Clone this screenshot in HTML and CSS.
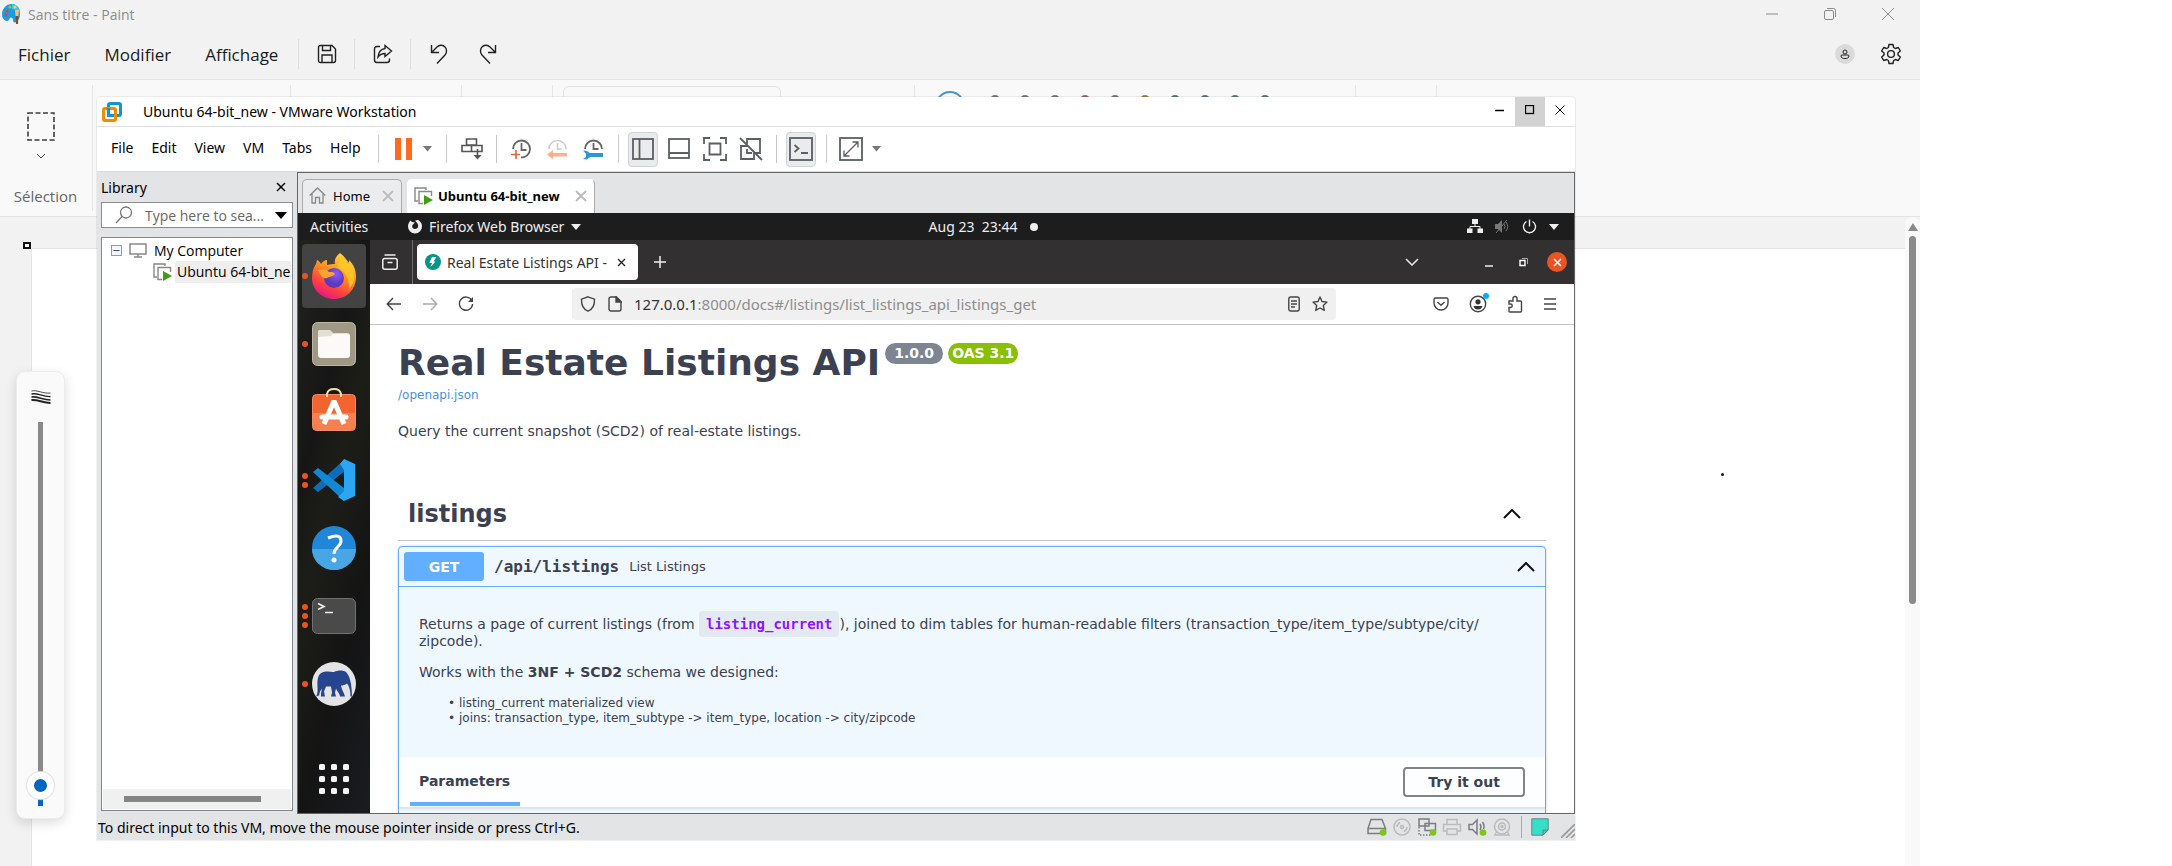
FILE: index.html
```html
<!DOCTYPE html>
<html lang="fr">
<head>
<meta charset="utf-8">
<title>Sans titre - Paint</title>
<link rel="stylesheet" href="styles.css">
</head>
<body>
<div class="paint">
  <header class="paint-title">
    <svg class="paint-logo" width="20" height="22" viewBox="0 0 20 22"><path d="M10 1C4 1 0 6 0 11c0 4 2 7 5 7 2 0 2-2 3-3s3 0 3 2 1 3 3 2c4-2 5-8 3-13-1-3-4-5-7-5z" fill="#1b9de2"/><path d="M10 1c4 0 7 3 8 7l-8-2z" fill="#45c3f5"/><circle cx="5" cy="8" r="1.6" fill="#e8442e"/><circle cx="8" cy="4" r="1.6" fill="#7bd04b"/><circle cx="4" cy="12" r="1.5" fill="#d4472b"/><circle cx="13" cy="4" r="1.5" fill="#ffd23a"/><path d="M13 7h4l-.6 6h-2.8z" fill="#f0c27a"/><path d="M13.6 13h2.8l-.4 8h-2z" fill="#8f4a1c"/></svg>
    <span class="paint-name">Sans titre - Paint</span>
    <div class="paint-controls">
      <button aria-label="Réduire"><svg width="14" height="14" viewBox="0 0 14 14"><path d="M1 7h12"/></svg></button>
      <button aria-label="Restaurer"><svg width="14" height="14" viewBox="0 0 14 14"><rect x="1.500" y="3.500" width="9" height="9" rx="1.500"/><path d="M4 1.500h6.500a2 2 0 0 1 2 2V10"/></svg></button>
      <button aria-label="Fermer"><svg width="14" height="14" viewBox="0 0 14 14"><path d="M1 1l12 12M13 1L1 13"/></svg></button>
    </div>
  </header>
  <nav class="paint-menu">
    <div class="paint-menus"><button>Fichier</button><button>Modifier</button><button>Affichage</button></div>
    <div class="quick first"><button aria-label="Enregistrer"><svg width="20" height="20" viewBox="0 0 20 20"><path d="M3 1.500h12L18.500 5v11.500a2 2 0 0 1-2 2h-13a2 2 0 0 1-2-2v-13a2 2 0 0 1 2-2z"/><path d="M5.500 1.500v5h8v-5M5 18.500v-7.500h10v7.500"/></svg></button></div>
    <div class="quick"><button aria-label="Partager"><svg width="20" height="20" viewBox="0 0 20 20"><path d="M7 2.500H4a2.500 2.500 0 0 0-2.500 2.500v11A2.500 2.500 0 0 0 4 18.500h10a2.500 2.500 0 0 0 2.500-2.500v-1.500"/><path d="M12 1.500l6.500 5.500L12 12.500V9.500c-3 0-5 1-7 3.500.5-4.500 3-8 7-8.500z"/></svg></button></div>
    <div class="quick undo"><button aria-label="Annuler"><svg width="20" height="20" viewBox="0 0 20 20"><path d="M2.500 1v7.500H10M3 8l5-5c3-3 6.500-1.500 8 0s2.500 5 0 8l-8 8.500"/></svg></button><button aria-label="Rétablir"><svg width="20" height="20" viewBox="0 0 20 20"><path d="M17.500 1v7.500H10M17 8l-5-5C9 0 5.500 1.500 4 3s-2.500 5 0 8l8 8.500"/></svg></button></div>
    <div class="paint-account">
      <button class="avatar" aria-label="Compte"><svg width="10" height="10" viewBox="0 0 10 10"><circle cx="5" cy="3" r="2"/><path d="M2 6h6a1 1 0 0 1 1 1c0 2-2 2.500-4 2.500S1 9 1 7a1 1 0 0 1 1-1z"/></svg></button>
      <button aria-label="Paramètres"><svg width="22" height="22" viewBox="0 0 22 22"><path d="M9 1.500h4l.6 3 1.700 1 3-1 2 3.400-2.300 2.100v2l2.300 2.100-2 3.400-3-1-1.700 1-.6 3H9l-.6-3-1.700-1-3 1-2-3.400L4 12V10L1.700 7.900l2-3.400 3 1 1.700-1z" stroke-linejoin="round"/><circle cx="11" cy="11" r="3.400"/></svg></button>
    </div>
  </nav>
  <section class="ribbon">
    <div class="group tool">
      <button class="select-tool"><svg width="28" height="29" viewBox="0 0 28 29"><rect x="1" y="1" width="26" height="27" fill="none" stroke="#3c3c3c" stroke-width="1.600" stroke-dasharray="5 2.500"/></svg><svg width="10" height="6" viewBox="0 0 10 6"><path d="M1 1l4 4 4-4"/></svg><span>Sélection</span></button>
    </div>
    <div class="group g2"></div><div class="group g3"></div><div class="group g4"></div>
    <div class="group g5"><div class="shapes"></div></div>
    <div class="group g6"><i class="ring"></i><div class="swatches"><i></i><i></i><i></i><i></i><i></i><i></i><i></i><i></i><i></i><i></i></div></div>
    <div class="group g7"></div>
  </section>
  <main class="workspace">
    <div class="ruler"><i class="handle"></i></div>
    <div class="sheet"><i class="ink"></i></div>
    <div class="paint-scroll"><svg width="10" height="8" viewBox="0 0 10 8"><path d="M5 0l5 8H0z" fill="#8a8a8a"/></svg><i></i></div>
  </main>
  <aside class="size-card">
    <svg width="20" height="14" viewBox="0 0 20 14" fill="none" stroke="#222"><path d="M.5 1C6-.5 12 4 19.500 3" stroke-width=".8"/><path d="M.5 4c6-1.500 11 3 19 2.500" stroke-width="1.300"/><path d="M.5 7c6-1 11 3 19 3" stroke-width="1.600"/><path d="M.5 10c6-1 11 3 19 3" stroke-width="2"/></svg>
    <input type="range" min="0" max="100" value="2" aria-label="Taille">
  </aside>

  <div class="vm">
    <header class="vm-title">
      <svg width="20" height="20" viewBox="0 0 20 20" fill="none" stroke-width="3"><rect x="6.500" y="1.500" width="12" height="12" rx="1.500" stroke="#0f96d4"/><rect x="1.500" y="6.500" width="12" height="12" rx="1.500" stroke="#f38b00"/><path d="M6.500 6v7.500H12" stroke="#0f96d4"/></svg>
      <span>Ubuntu 64-bit_new - VMware Workstation</span>
      <div class="vm-controls">
        <button aria-label="Minimize"><svg width="11" height="11"><path d="M0 5.500h9"/></svg></button>
        <button class="max" aria-label="Maximize"><svg width="11" height="11"><rect x=".5" y=".5" width="8" height="8"/></svg></button>
        <button aria-label="Close"><svg width="11" height="11"><path d="M.5.5l9 9M9.500.5l-9 9" stroke-width="1"/></svg></button>
      </div>
    </header>
    <nav class="vm-bar">
      <div class="vm-menus"><button>File</button><button>Edit</button><button>View</button><button>VM</button><button>Tabs</button><button>Help</button></div>
      <div class="tools t1"><button aria-label="Pause"><svg width="18" height="22" viewBox="0 0 18 22"><path d="M0 0h6v22H0zM11 0h6v22h-6z" fill="#ff6a1f"/></svg></button><button aria-label="Power menu"><svg width="9" height="6"><path d="M0 0h9L4.500 5.500z" fill="#777"/></svg></button></div>
      <div class="tools t2"><button aria-label="Send Ctrl+Alt+Del"><svg width="22" height="22" viewBox="0 0 22 22" fill="none" stroke="#555" stroke-width="1.600"><path d="M5.500 1h10v6h-10zM1 7.500h9.500v6H1zM10.500 7.500H21v6H10.500zM16.500 11v9"/><path d="M12.500 17h8l-4 4.500z" fill="#555" stroke="none"/></svg></button></div>
      <div class="tools t3">
        <button aria-label="Snapshot"><svg width="22" height="22" viewBox="0 0 22 22" fill="none"><path d="M3 11a8.500 8.500 0 1 1 8 8.500M11.500 5v7h5" stroke="#666" stroke-width="1.800"/><path d="M6 12v9M1 16.500h9" stroke="#e9643a" stroke-width="1.600"/></svg></button>
        <button aria-label="Revert"><svg width="22" height="22" viewBox="0 0 22 22" fill="none"><path d="M3 11a8.500 8.500 0 0 1 17 0M11.500 5v6h4" stroke="#ccc" stroke-width="1.600"/><path d="M1 16.500l6-4.500v3h14v3.500H7v2.500z" fill="#ffb08a"/></svg></button>
        <button aria-label="Manage snapshots"><svg width="22" height="22" viewBox="0 0 22 22" fill="none"><path d="M3 11a8.500 8.500 0 0 1 17 0M11.500 5v6h5" stroke="#666" stroke-width="1.800"/><path d="M1 12.500l4 .5 3 2h13v4H8l-3 2.500-4-.5 3-2v-3z" fill="#2d97d6"/></svg></button>
      </div>
      <div class="tools t4">
        <button class="on" aria-label="Library view"><svg width="22" height="22" viewBox="0 0 22 22"><rect x="1" y="1" width="20" height="20"/><path d="M7.500 1v20"/></svg></button>
        <button aria-label="Thumbnails"><svg width="22" height="22" viewBox="0 0 22 22"><rect x="1" y="1" width="20" height="19"/><path d="M1 15h20"/></svg></button>
        <button aria-label="Full screen"><svg width="24" height="24" viewBox="0 0 24 24"><path d="M1 7V1h6M17 1h6v6M23 17v6h-6M7 23H1v-6M6.500 6.500h11v11h-11z"/></svg></button>
        <button aria-label="Unity"><svg width="24" height="24" viewBox="0 0 24 24"><path d="M8 7V2h13v14h-5M8 12v4h5M9 9H2v13h13v-7"/><path d="M1 1l22 22"/></svg></button>
      </div>
      <div class="tools t5"><button class="on" aria-label="Console"><svg width="24" height="24" viewBox="0 0 24 24"><rect x="1" y="1" width="22" height="22"/><path d="M5.500 8l4 3.500-4 3.500M12 16h7"/></svg></button></div>
      <div class="tools t6"><button aria-label="Stretch"><svg width="24" height="24" viewBox="0 0 24 24"><rect x="1" y="1" width="22" height="22"/><path d="M5 13.500V19h5.500M13.500 5H19v5.500M5.500 18.500l13-13" stroke-width="1.300"/></svg></button><button aria-label="Stretch menu"><svg width="9" height="6"><path d="M0 0h9L4.500 5.500z" fill="#777" stroke="none"/></svg></button></div>
    </nav>
    <div class="vm-body">
      <aside class="library">
        <div class="lib-head"><span>Library</span><button aria-label="Close library"><svg width="10" height="10"><path d="M1 1l8 8M9 1L1 9" stroke="#000" stroke-width="1.500"/></svg></button></div>
        <label class="search"><svg width="18" height="18" viewBox="0 0 18 18" fill="none" stroke="#777" stroke-width="1.300"><circle cx="11" cy="6.500" r="5.500"/><path d="M7 10.500L1 17"/></svg><input type="text" placeholder="Type here to sea..." aria-label="Search library"><svg width="12" height="7"><path d="M0 0h12L6 7z" fill="#000"/></svg></label>
        <div class="tree">
          <div class="node root"><svg width="11" height="11" viewBox="0 0 11 11"><rect x=".5" y=".5" width="10" height="10" fill="#f6f6f6" stroke="#999"/><path d="M2.500 5.500h6" stroke="#2f4f9c"/></svg><svg width="18" height="15" viewBox="0 0 18 15" fill="none" stroke="#888" stroke-width="1.500"><path d="M1 1h16v10H1zM9 11v3M5 14h8"/></svg><span>My Computer</span></div>
          <div class="node leaf"><svg width="19" height="18" viewBox="0 0 19 18" fill="none"><path d="M4 14H1V1h11v2M9 16.500H5V4.500h12.500V9" stroke="#888" stroke-width="1.400"/><path d="M10 8l9 5-9 5z" fill="#3f9c14"/></svg><span>Ubuntu 64-bit_ne</span></div>
          <div class="tree-scroll"><i></i></div>
        </div>
      </aside>
      <section class="console">
        <div class="vm-tabs">
          <div class="vm-tab"><svg width="17" height="17" viewBox="0 0 17 17" fill="none" stroke="#888" stroke-width="1.300"><path d="M.7 8.500L8.500 1l7.800 7.500M3 7v9h3.500v-5.500h4V16H14V7"/></svg><span>Home</span><button aria-label="Close Home"><svg width="12" height="12"><path d="M1 1l10 10M11 1L1 11"/></svg></button></div>
          <div class="vm-tab active"><svg width="19" height="18" viewBox="0 0 19 18" fill="none"><path d="M4 14H1V1h11v2M9 16.500H5V4.500h12.500V9" stroke="#888" stroke-width="1.400"/><path d="M10 8l9 5-9 5z" fill="#3f9c14"/></svg><span>Ubuntu 64-bit_new</span><button aria-label="Close Ubuntu"><svg width="12" height="12"><path d="M1 1l10 10M11 1L1 11"/></svg></button></div>
        </div>
        <div class="gnome">
          <span class="activities">Activities</span>
          <span class="appmenu"><svg width="14" height="15" viewBox="0 0 14 15"><path d="M7 1.500C10 1 9.500 0 12 2.500c1.500 1.500 2 3 2 5A7 7 0 0 1 0 7.500C0 5 1 3 2.500 1.500L4 3l3 .500-2 2c-1.500 1-1 4.500 2 4.500s4-3 2.500-5.500C9 3.500 8 3 7 1.500z" fill="#eee"/></svg>Firefox Web Browser<svg width="10" height="6"><path d="M0 0h10L5 6z" fill="#eee"/></svg></span>
          <span class="clock">Aug 23&nbsp; 23:44<i></i></span>
          <span class="sys">
            <svg width="16" height="15" viewBox="0 0 16 15"><path d="M5 0h6v5H5zM0 9.500h5.500V14H0zM10.500 9.500H16V14h-5.500z" fill="#eee"/><path d="M8 5v3M3 10V7.500h10V10" fill="none" stroke="#eee"/></svg>
            <svg width="15" height="15" viewBox="0 0 15 15"><path d="M0 5h3l4-4v13l-4-4H0z" fill="#777"/><path d="M9 5q2 2.500 0 5M11 3q3.500 4.500 0 9M1 14L12 1" fill="none" stroke="#777"/></svg>
            <svg width="15" height="15" viewBox="0 0 15 15" fill="none" stroke="#eee" stroke-width="1.400"><path d="M4.500 2.500a6 6 0 1 0 6 0M7.500.5v7"/></svg>
            <svg width="10" height="6"><path d="M0 0h10L5 6z" fill="#eee"/></svg>
          </span>
        </div>
        <div class="session">
          <aside class="dock">
            <div class="app current"><span class="pips"><i></i></span><svg width="46" height="46" viewBox="0 0 46 46"><defs><linearGradient id="fx" x1=".8" y1="0" x2=".3" y2="1"><stop offset="0" stop-color="#ffe23a"/><stop offset=".45" stop-color="#ff9020"/><stop offset=".75" stop-color="#ff4040"/><stop offset="1" stop-color="#e31587"/></linearGradient><radialGradient id="fp" cx=".6" cy=".3"><stop offset="0" stop-color="#9059ff"/><stop offset="1" stop-color="#5b3ac0"/></radialGradient></defs><path d="M29 0c4 3 7 7 7 11 3-1 2-3 2-4 5 5 7 10 7 17C45 37 35 46 23 46S1 37 1 25C1 20 2 15 5 11l1-4c2 1 3 2 4 4 1-2 4-4 6-4v5c3-1 6-1 8-1-1-4 1-8 5-11z" fill="url(#fx)"/><path d="M31 2c7 7 12 12 12 22 0 5-2 9-5 12 1-8-2-17-12-22z" fill="#ffc928" opacity=".8"/><circle cx="23" cy="25" r="10" fill="url(#fp)"/><path d="M7 17c5-1 9-1 11 2 3 0 5 0 6 2-2 3-5 2-8 4-3 1-6-1-9-8z" fill="#ffa52c"/></svg></div>
            <div class="app"><span class="pips"><i></i></span><svg width="44" height="44" viewBox="0 0 44 44"><rect x=".5" y=".5" width="43" height="43" rx="5" fill="#9f9884" stroke="#bcb6a6"/><path d="M6 12V10q0-2 2-2h10l3 3h14q3 0 3 3H6z" fill="#e3dfd4"/><rect x="6" y="12" width="32" height="24" rx="3" fill="#fbfaf8"/><path d="M6 15V10q0-2 2-2h9l4 3-2 3z" fill="#e3dfd4"/></svg></div>
            <div class="app store"><span class="pips"></span><svg width="44" height="37" viewBox="0 7 44 37"><rect x=".5" y="7.500" width="43" height="36" rx="4" fill="#f26430" stroke="#f58a62"/><path d="M1 26h42v13q0 4-4 4H5q-4 0-4-4z" fill="#f58050"/><path d="M15 10V7q1-5 7-5t7 5v3" fill="none" stroke="#f5ddaa" stroke-width="2"/><path d="M12 37L22 14l10 23" fill="none" stroke="#fff" stroke-width="5" stroke-linejoin="bevel"/><path d="M10 30h24" stroke="#fff" stroke-width="5" stroke-linecap="round"/></svg></div>
            <div class="app"><span class="pips"><i></i><i></i></span><svg width="44" height="44" viewBox="0 0 44 44"><path d="M1 30l5 4 27-21V1z" fill="#0a6fb8"/><path d="M1 14l5-4 26 20v13z" fill="#1287d4"/><path d="M32 1l11 5v32l-11 5-6-4 6-6V12l-4-6z" fill="#2aa6f2"/></svg></div>
            <div class="app"><span class="pips"></span><svg width="44" height="44" viewBox="0 0 44 44"><circle cx="22" cy="22" r="22" fill="#1f86d8"/><path d="M0 23h44a22 21 0 0 1-44 0z" fill="#48a6e4"/><path d="M16 12q13-5 13 3c0 6-7 6-7 13" fill="none" stroke="#fff" stroke-width="3"/><circle cx="22" cy="34" r="2.500" fill="#fff"/></svg></div>
            <div class="app"><span class="pips"><i></i><i></i><i></i></span><svg width="44" height="36" viewBox="0 0 44 36"><rect x=".5" y=".5" width="43" height="35" rx="5" fill="#4a4a4a" stroke="#727272"/><path d="M6 5.500l6 3-6 3M13 14.500h8" fill="none" stroke="#eee" stroke-width="1.700"/></svg></div>
            <div class="app"><span class="pips"><i></i></span><svg width="44" height="44" viewBox="0 0 44 44"><circle cx="22" cy="22" r="22" fill="#e4e4e4"/><path d="M4 34.500c2-3 1.500-6 1.500-9C5 16 6 10 14 9.500c3 0 6 .5 8 .5 4-2 9-2 12 0 3 3 4 7 5 12 .5 4 1 8 1 12.500h-1.500c0-5-1-10-3.500-13-2 1.500-4 2-6 2 .5 3 2 6 3 8l1 3h-5c0-3-3-5-4-8l-1 4 1 4h-5l1-4-1-6h-5l-2 5 1 5H9v-3l1-5-2 3-1 4z" fill="#27448f"/></svg></div>
            <div class="app grid"><span class="pips"></span><svg width="30" height="30" viewBox="0 0 30 30" fill="#f4f4f4"><rect width="6" height="6" rx="1.500"/><rect x="12" width="6" height="6" rx="1.500"/><rect x="24" width="6" height="6" rx="1.500"/><rect y="12" width="6" height="6" rx="1.500"/><rect x="12" y="12" width="6" height="6" rx="1.500"/><rect x="24" y="12" width="6" height="6" rx="1.500"/><rect y="24" width="6" height="6" rx="1.500"/><rect x="12" y="24" width="6" height="6" rx="1.500"/><rect x="24" y="24" width="6" height="6" rx="1.500"/></svg></div>
          </aside>
          <div class="firefox">
            <div class="ff-tabs">
              <button class="archive" aria-label="Recent"><svg width="16" height="16" viewBox="0 0 16 16" fill="none" stroke="#eee" stroke-width="1.500"><rect x=".8" y="4.500" width="14.400" height="10.700" rx="2"/><path d="M2.500 1h11M5.500 8.500h5"/></svg></button>
              <div class="ff-tab"><svg width="16" height="16" viewBox="0 0 16 16"><circle cx="8" cy="8" r="8" fill="#059487"/><path d="M11.500 3H7l-2.700 6H7l-1.500 4 5-5.500H8.500z" fill="#fff"/></svg><span>Real Estate Listings API - </span><button aria-label="Close tab"><svg width="9" height="9"><path d="M1 1l7 7M8 1L1 8" stroke="#222" stroke-width="1.300"/></svg></button></div>
              <button class="plus" aria-label="New tab"><svg width="12" height="12"><path d="M6 0v12M0 6h12" stroke="#eee" stroke-width="1.500"/></svg></button>
              <div class="ff-controls">
                <button aria-label="List tabs"><svg width="14" height="8" fill="none" stroke="#eee" stroke-width="1.500"><path d="M1 1l6 6 6-6"/></svg></button>
                <button aria-label="Minimize"><svg width="8" height="9"><path d="M0 8h8" stroke="#eee" stroke-width="1.500"/></svg></button>
                <button aria-label="Restore"><svg width="9" height="9" fill="none"><path d="M1 2.500h5v5H1z" stroke="#fff" stroke-width="1.400"/><path d="M3 .5h5.500V6" stroke="#aaa"/></svg></button>
                <button class="ff-close" aria-label="Close"><svg width="9" height="9"><path d="M1 1l7 7M8 1L1 8" stroke="#fff" stroke-width="1.500"/></svg></button>
              </div>
            </div>
            <div class="ff-nav">
              <div class="nav-buttons">
                <button aria-label="Back"><svg width="16" height="16" viewBox="0 0 16 16"><path d="M15 8H1.500M7 2L1.200 8 7 14"/></svg></button>
                <button class="off" aria-label="Forward"><svg width="16" height="16" viewBox="0 0 16 16"><path d="M1 8h13.500M9 2l5.800 6L9 14"/></svg></button>
                <button aria-label="Reload"><svg width="16" height="16" viewBox="0 0 16 16"><path d="M13.800 4.500A6.600 6.600 0 1 0 14.600 8"/><path d="M15 1v5h-5z" fill="#444" stroke="none"/></svg></button>
              </div>
              <div class="url">
                <svg width="16" height="16" viewBox="0 0 16 16"><path d="M8 .8l6.500 2.400c.3 6-2 10-6.500 12C3.500 13.200 1.200 9.200 1.500 3.200z"/></svg>
                <svg width="14" height="16" viewBox="0 0 14 16"><path d="M3 1h5.500L13 5.500V13a2 2 0 0 1-2 2H3a2 2 0 0 1-2-2V3a2 2 0 0 1 2-2z"/><path d="M8 1v5h5z" fill="#444"/></svg>
                <span class="address"><b>127.0.0.1</b>:8000/docs#/listings/list_listings_api_listings_get</span>
                <svg width="12" height="16" viewBox="0 0 12 16"><rect x=".8" y="1" width="10.400" height="14" rx="2"/><path d="M3 5h6M3 8h6M3 11h4"/></svg>
                <svg width="16" height="16" viewBox="0 0 16 16"><path d="M8 1l2 4.500 5 .6-3.700 3.300 1 5L8 12l-4.300 2.400 1-5L1 6.100l5-.6z" stroke-linejoin="round"/></svg>
              </div>
              <div class="nav-right">
                <button aria-label="Pocket"><svg width="16" height="16" viewBox="0 0 16 16"><path d="M2.500 2h11a1.500 1.500 0 0 1 1.500 1.500V7A7 7 0 0 1 1 7V3.500A1.500 1.500 0 0 1 2.500 2z"/><path d="M4.500 6L8 9.300 11.500 6"/></svg></button>
                <button class="account" aria-label="Account"><svg width="18" height="18" viewBox="0 0 18 18"><circle cx="9" cy="9" r="7.700"/><circle cx="9" cy="6.800" r="2.600" fill="#333" stroke="none"/><path d="M4.500 11h9q-1 3.500-4.500 3.500T4.500 11z" fill="#333" stroke="none"/></svg><i></i></button>
                <button aria-label="Extensions"><svg width="16" height="18" viewBox="0 0 16 18"><path d="M2 6h4V3.500a2 2 0 0 1 4 0V6h3.500q1 0 1 1v9q0 1-1 1H3q-1 0-1-1v-3.500h1.500a1.700 1.700 0 0 0 0-3.500H2z"/></svg></button>
                <button aria-label="Menu"><svg width="14" height="12" viewBox="0 0 14 12"><path d="M1 1h12M1 6h12M1 11h12"/></svg></button>
              </div>
            </div>
            <article class="page">
              <h1>Real Estate Listings API<span class="badges"><small>1.0.0</small><small class="oas">OAS 3.1</small></span></h1>
              <a class="spec" href="#">/openapi.json</a>
              <p class="intro">Query the current snapshot (SCD2) of real-estate listings.</p>
              <h2>listings<button aria-label="Collapse listings"><svg width="18" height="10"><path d="M1 9l8-8 8 8"/></svg></button></h2>
              <section class="op">
                <div class="op-head"><button class="get">GET</button><span class="path">/api/listings</span><span class="summary">List Listings</span><button class="fold" aria-label="Collapse operation"><svg width="18" height="10"><path d="M1 9l8-8 8 8"/></svg></button></div>
                <div class="desc">
                  <p>Returns a page of current listings (from <code>listing_current</code>), joined to dim tables for human-readable filters (transaction_type/item_type/subtype/city/<wbr>zipcode).</p>
                  <p>Works with the <strong>3NF + SCD2</strong> schema we designed:</p>
                  <ul><li>listing_current materialized view</li><li>joins: transaction_type, item_subtype -&gt; item_type, location -&gt; city/zipcode</li></ul>
                </div>
                <div class="params"><h4>Parameters</h4><button class="try">Try it out</button></div>
              </section>
            </article>
          </div>
        </div>
      </section>
    </div>
    <footer class="vm-status">
      <span>To direct input to this VM, move the mouse pointer inside or press Ctrl+G.</span>
      <div class="devices">
        <svg width="20" height="18" viewBox="0 0 20 18"><path d="M4 1.500h11l3.500 9v5H1v-5zM1 10.500h17"/><circle cx="16" cy="14.500" r="3.300" class="live"/></svg>
        <svg width="20" height="18" viewBox="0 0 20 18" class="dim"><circle cx="10" cy="9" r="8"/><circle cx="10" cy="9" r="1.500"/><path d="M5 9q0-3 3-4.500M15 9q0 3-3 4.500"/></svg>
        <svg width="20" height="18" viewBox="0 0 20 18"><path d="M2 1h10v7H2zM8 5.500h10.500v7H8z"/><path d="M2 9v8h12" stroke-dasharray="1.500 1.500"/><circle cx="16" cy="14.500" r="3.300" class="live"/></svg>
        <svg width="20" height="18" viewBox="0 0 20 18" class="dim"><path d="M5 6V1.500h10V6M5 13H1.500V6.500h17V13H15M5 11h10v5.500H5z"/></svg>
        <svg width="20" height="18" viewBox="0 0 20 18"><path d="M2 6.500h3.500L10 2v14l-4.500-4.500H2zM13 6q2 3 0 6M15.500 4q2.500 4 1 7"/><circle cx="16" cy="14.500" r="3.300" class="live"/></svg>
        <svg width="20" height="18" viewBox="0 0 20 18" class="dim"><circle cx="10" cy="8.500" r="7.500"/><circle cx="10" cy="8.500" r="3.500"/><circle cx="10" cy="8.500" r="1"/><path d="M4.500 14L3 17h14l-1.500-3"/></svg>
      </div>
      <div class="note"><svg width="18" height="18" viewBox="0 0 18 18"><path d="M.8.800h16.400V12L12 17.200H.8z" fill="#36e0c8" stroke="#5a8a88"/><path d="M17 12h-5v5z" fill="#5fb8ac" stroke="#5a8a88"/></svg><svg class="grip" width="14" height="14" viewBox="0 0 14 14"><path d="M0 14L14 0M5 14l9-9M10 14l4-4" stroke="#999" stroke-width="1.600"/></svg></div>
    </footer>
  </div>
</div>
</body>
</html>
```
FILE: styles.css
```css
* { box-sizing: border-box; }
body { margin: 0; background: #fff; font-family: "Open Sans", "Noto Sans", sans-serif; color: #1b1b1b; }
button { border: 0; padding: 0; margin: 0; background: none; color: inherit; font: inherit; display: flex; align-items: center; justify-content: center; }
svg { display: block; flex: none; }
i { display: block; }

/* Paint window */
.paint { position: relative; width: 88.4%; height: 100vh; min-height: 640px; display: flex; flex-direction: column; overflow: hidden; background: #f2f2f2; }
.paint-title { display: flex; align-items: center; height: 28px; padding: 0 25px 0 2px; color: #8c8c8c; font-size: 14px; }
.paint-name { margin-left: 6px; }
.paint-controls { margin-left: auto; display: flex; gap: 44px; }
.paint-controls svg { fill: none; stroke: #8a8a8a; }
.paint-menu { display: flex; align-items: center; height: 52px; border-bottom: 1px solid #e6e6e6; font-size: 17px; padding-right: 18px; }
.paint-menus { display: flex; gap: 34px; width: 298px; padding: 2px 0 0 18px; }
.quick { display: flex; align-items: center; justify-content: center; width: 56px; height: 30px; border-left: 1px solid #dcdcdc; }
.quick svg, .paint-account svg { fill: none; stroke: #222; stroke-width: 1.4; }
.quick.undo { width: auto; padding-left: 18px; gap: 29px; }
.paint-account { margin-left: auto; display: flex; align-items: center; gap: 25px; }
.paint-account .avatar { width: 20px; height: 20px; border-radius: 50%; background: #dadada; }
.avatar svg { stroke-width: 1; }
.ribbon { display: flex; height: 137px; padding: 5px 0; background: #f9f9f9; border-bottom: 1px solid #e4e4e4; }
.group { border-right: 1px solid #e6e6e6; overflow: hidden; }
.tool { width: 93px; }
.select-tool { flex-direction: column; width: 82px; padding-top: 27px; font-size: 15px; color: #666; }
.select-tool svg + svg { margin-top: 12px; fill: none; stroke: #444; }
.select-tool span { margin-top: 27px; padding-left: 9px; line-height: 20px; }
.g2 { width: 198px; }
.g3 { width: 171px; }
.g4 { width: 91px; }
.g5 { width: 362px; padding: 1px 10px; }
.shapes { width: 218px; height: 80px; border: 1px solid #e2e2e2; border-radius: 6px; }
.g6 { width: 441px; display: flex; padding: 6px 20px; }
.ring { width: 30px; height: 30px; border: 2px solid #4a95d6; border-radius: 50%; }
.swatches { display: flex; gap: 20px; padding: 4px 0 0 25px; }
.swatches i { width: 10px; height: 10px; border-radius: 50%; background: #777; }
.swatches i:nth-child(4) { background: #a0626a; }
.swatches i:nth-child(6) { background: #8b8b4a; }
.swatches i:nth-child(n+7) { background: #5f7480; }
.g7 { width: 81px; }
.workspace { flex: 1; display: grid; grid-template-columns: 31px 1fr 15px; }
.ruler { display: flex; justify-content: flex-end; padding-top: 25px; }
.handle { width: 8px; height: 7px; border: 2px solid #111; background: #fff; }
.sheet { margin-top: 31px; background: #fff; border: 1px solid #e4e4e4; border-width: 1px 0 0 1px; }
.ink { width: 3px; height: 3px; border-radius: 50%; background: #111; margin: 224px 0 0 90.2%; }
.paint-scroll { display: flex; flex-direction: column; align-items: center; gap: 5px; padding-top: 6px; background: #f9f9f9; border-radius: 8px 8px 0 0; }
.paint-scroll i { width: 7px; height: 368px; border-radius: 4px; background: #8a8a8a; }
.size-card { position: absolute; left: 16px; top: 371px; width: 49px; height: 448px; padding-top: 18px; display: flex; flex-direction: column; align-items: center; gap: 18px; background: #fafafa; border: 1px solid #ececec; border-radius: 9px; box-shadow: 0 4px 12px rgba(0,0,0,.14); }
.size-card input { appearance: none; writing-mode: vertical-lr; direction: rtl; width: 27px; height: 384px; margin: 0; background: linear-gradient(#8a8a8a, #8a8a8a) center / 5px 100% no-repeat; }
.size-card input::-webkit-slider-runnable-track { width: 27px; height: 100%; background: linear-gradient(#0067c0, #0067c0) center bottom / 5px 8px no-repeat; }
.size-card input::-webkit-slider-thumb { appearance: none; width: 27px; height: 27px; border: 7px solid #fff; border-radius: 50%; background: #0067c0; box-shadow: 0 0 1px 1px #e0e0e0; }

/* Virtual machine window */
.vm { position: absolute; left: 97px; top: 97px; right: 345px; bottom: 26px; display: flex; flex-direction: column; background: #e3e4e6; border-radius: 4px 4px 0 0; box-shadow: 0 0 0 1px rgba(0,0,0,.06); color: #000; font-family: "Noto Sans", sans-serif; font-size: 14px; overflow: hidden; }
.vm-title { display: flex; height: 30px; padding-left: 5px; align-items: center; background: #fff; border-bottom: 1px solid #dedede; }
.vm-title span { margin-left: 21px; }
.vm-controls { margin-left: auto; display: flex; height: 100%; }
.vm-controls button { width: 30px; height: 100%; padding-bottom: 2px; }
.vm-controls svg { fill: none; stroke: #000; stroke-width: 1.3; }
.vm-controls .max { background: #d2d2d2; }
.vm-bar { display: flex; align-items: center; height: 45px; background: #fff; border-bottom: 1px solid #ddd; }
.vm-menus { display: flex; width: 281px; padding: 0 0 3px 14px; gap: 18px; }
.tools { display: flex; align-items: center; height: 28px; border-left: 1px solid #c8c8c8; }
.t1 { width: 68px; padding-left: 16px; gap: 10px; }
.t2 { width: 50px; padding-left: 14px; }
.t3 { width: 122px; padding-left: 13px; gap: 14px; }
.t4 { width: 158px; padding-left: 9px; gap: 6px; }
.t5 { width: 50px; padding-left: 9px; }
.t6 { padding-left: 12px; gap: 9px; }
.t4 button, .t5 button { width: 30px; height: 35px; border-radius: 4px; }
.t4 svg, .t5 svg, .t6 svg { fill: none; stroke: #5a5f63; stroke-width: 1.8; }
.tools .on { background: #e9ebec; border: 1px solid #cfd3d4; }
.vm-body { flex: 1; min-height: 0; display: grid; grid-template-columns: 200px minmax(0, 1fr); }
.library { display: flex; flex-direction: column; min-height: 0; min-width: 0; padding: 2px 4px 3px; }
.lib-head { display: flex; align-items: center; justify-content: space-between; height: 26px; padding-right: 7px; }
.search { display: flex; align-items: center; height: 26px; margin-top: 2px; padding: 0 5px 0 13px; gap: 12px; background: #fff; border: 1px solid #8c8c8c; }
.search input { flex: 1; min-width: 0; border: 0; padding: 0; outline: 0; background: none; font: 14px "Open Sans", sans-serif; }
.search input::placeholder { color: #666; opacity: 1; }
.tree { position: relative; flex: 1; min-height: 0; display: flex; flex-direction: column; margin-top: 9px; padding: 1px; background: #fff; border: 1px solid #828790; overflow: hidden; }
.node { display: flex; align-items: center; height: 22px; white-space: nowrap; font-family: "Open Sans", sans-serif; }
.root { padding-left: 8px; gap: 7px; }
.leaf { padding-left: 50px; gap: 3px; }
.leaf span { flex: 1; height: 22px; padding-left: 2px; background: #eee; line-height: 22px; }
.tree-scroll { display: flex; align-items: center; height: 20px; margin-top: auto; padding-left: 21px; background: #f0f0f0; }
.tree-scroll i { width: 137px; height: 6px; background: #858585; }
.console { display: flex; flex-direction: column; min-width: 0; min-height: 0; border: 1px solid #666; }
.vm-tabs { display: flex; align-items: flex-end; gap: 5px; height: 40px; padding-left: 4px; }
.vm-tab { display: flex; align-items: center; height: 34px; width: 100px; padding: 0 7px 2px 6px; border: 1px solid #aaa; border-bottom: 0; border-radius: 5px 5px 0 0; background: #ebecee; font-size: 13px; }
.vm-tab span { margin-left: 7px; }
.vm-tab button { margin-left: auto; }
.vm-tab button svg { stroke: #bbb; stroke-width: 1.8; }
.vm-tab.active { width: 188px; background: #fff; border-color: #fff #aaa #fff #fff; font-weight: 700; }
.vm-tab.active span { margin-left: 5px; }
.gnome { display: grid; grid-template-columns: 1fr auto 1fr; align-items: center; height: 27px; padding: 0 15px 0 12px; background: #1d1d1d; color: #eee; }
.activities { grid-area: 1 / 1; }
.appmenu { grid-area: 1 / 1; display: flex; align-items: center; gap: 7px; margin-left: 98px; }
.clock { grid-area: 1 / 2; display: flex; align-items: center; gap: 13px; margin-left: 98px; }
.clock i { width: 8px; height: 8px; border-radius: 50%; background: #eee; }
.sys { grid-area: 1 / 3; justify-self: end; display: flex; align-items: center; gap: 12px; }
.session { flex: 1; min-height: 0; display: grid; grid-template-columns: 72px minmax(0, 1fr); }
.dock { display: flex; flex-direction: column; gap: 4px; min-height: 0; padding: 4px 4px 2px; background: linear-gradient(105deg, #22231f, #161616 30%, #1d1d18 45%, #141414 70%, #191c20); }
.app { display: grid; grid-template-columns: 6px 1fr 6px; align-items: center; justify-items: center; height: 64px; flex: none; border-radius: 4px; }
.app.current { background: #434344; }
.app.grid { margin-top: auto; }
.store svg { overflow: visible; }
.pips { display: flex; flex-direction: column; gap: 3px; }
.pips i { width: 6px; height: 6px; border-radius: 50%; background: #e95420; }
.firefox { display: flex; flex-direction: column; min-width: 0; min-height: 0; overflow: hidden; background: #fff; color: #15141a; }
.ff-tabs { display: flex; align-items: center; height: 44px; flex: none; background: #323031; }
.archive { width: 43px; height: 44px; padding-right: 3px; border-right: 1px solid #707070; }
.ff-tab { display: flex; align-items: center; width: 221px; height: 36px; margin-left: 4px; padding: 0 12px 0 8px; gap: 6px; background: #fff; border-radius: 4px; color: #333; }
.ff-tab span { flex: 1; white-space: nowrap; overflow: hidden; }
.plus { margin-left: 16px; }
.ff-controls { margin-left: auto; display: flex; align-items: center; }
.ff-controls button { width: 34px; height: 34px; }
.ff-controls button:first-child { margin-right: 43px; }
.ff-controls .ff-close { width: 20px; height: 20px; margin: 0 7px; border-radius: 50%; background: #e95420; }
.ff-nav { display: grid; grid-template-columns: 202px minmax(0, 1fr) 238px; height: 41px; flex: none; border-bottom: 1px solid #c4c4c4; }
.ff-nav svg { fill: none; stroke: #444; stroke-width: 1.4; }
.nav-buttons { display: flex; padding-left: 16px; gap: 20px; }
.off { opacity: .45; }
.url { display: flex; align-items: center; height: 32px; align-self: center; padding: 0 8px; gap: 12px; background: #f0f0f0; border-radius: 4px; font-size: 15px; color: #8e8e8e; }
.url b { font-weight: 400; color: #333; }
.address { flex: 1; white-space: nowrap; overflow: hidden; }
.nav-right { display: flex; justify-content: flex-end; padding-right: 17px; gap: 20px; }
.account { position: relative; }
.account i { position: absolute; right: -2px; top: 9px; width: 6px; height: 6px; border-radius: 50%; background: #00adff; }

/* API documentation page */
.page { flex: 1; min-height: 0; padding: 0 28px; overflow: hidden; font-family: "DejaVu Sans", sans-serif; color: #3b4151; }
h1 { display: flex; align-items: flex-start; margin: 17px 0 0; font-size: 36px; line-height: 42px; white-space: nowrap; }
.badges { display: flex; gap: 5px; margin: 1px 0 0 5px; }
.badges small { padding: 0 9px; height: 21px; border-radius: 11px; background: #7d8492; color: #fff; font-size: 14px; line-height: 21px; }
.badges .oas { padding: 0 4px; background: #89bf04; }
.spec { display: block; margin-top: 4px; font-size: 12px; line-height: 14px; color: #4990e2; text-decoration: none; }
.intro { margin: 21px 0 0; font-size: 14px; line-height: 16px; }
h2 { display: flex; align-items: center; justify-content: space-between; height: 54px; margin: 48px 0 5px; padding: 0 25px 0 10px; border-bottom: 1px solid #c4c6ca; font-size: 24px; }
.page button svg { fill: none; stroke: #111; stroke-width: 2; }
.op { border: 1px solid #61affe; border-radius: 4px 4px 0 0; background: #eff7ff; box-shadow: 0 0 3px rgba(0,0,0,.19); height: 300px; }
.op-head { display: flex; align-items: center; height: 40px; padding: 0 10px 0 5px; border-bottom: 1px solid #61affe; }
.get { width: 80px; height: 29px; border-radius: 3px; background: #61affe; color: #fff; font-size: 14px; font-weight: 700; }
.path { margin-left: 10px; font: 700 16px "DejaVu Sans Mono", monospace; }
.summary { margin-left: 10px; font-size: 13px; }
.fold { margin-left: auto; }
.desc { height: 170px; padding: 29px 20px 0; font-size: 14px; line-height: 17px; }
.desc p { margin: 0 0 14px; }
.desc code { padding: 5px 7px; border-radius: 4px; background: #e2e9f1; color: #9012fe; font: 700 14px "DejaVu Sans Mono", monospace; }
.desc ul { margin: 15px 0 0; padding-left: 40px; font-size: 12px; line-height: 15px; list-style-type: "• "; }
.params { display: flex; align-items: center; justify-content: space-between; height: 51px; padding: 0 20px 0 11px; background: #fdfeff; border-bottom: 1px solid #dde3ea; box-shadow: 0 1px 2px rgba(0,0,0,.1); }
.params h4 { align-self: stretch; width: 110px; margin: 0 0 1px; padding-left: 9px; border-bottom: 4px solid #61affe; font-size: 14px; line-height: 48px; }
.try { width: 122px; height: 30px; border: 2px solid #808388; border-radius: 4px; font-size: 14px; font-weight: 700; }

/* Status bar */
.vm-status { display: flex; align-items: center; height: 26px; padding-left: 1px; }
.devices { display: flex; gap: 5px; margin-left: auto; padding-right: 9px; }
.devices svg { fill: none; stroke: #7b7d80; stroke-width: 1.5; }
.devices .dim { stroke: #b9bbbd; }
.devices .live { fill: #7dc51c; stroke: none; }
.note { display: flex; align-items: center; height: 22px; padding-left: 9px; gap: 12px; border-left: 1px solid #aaa; }
.grip { align-self: flex-end; }
```
